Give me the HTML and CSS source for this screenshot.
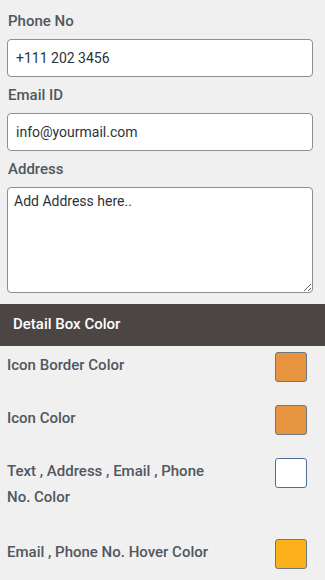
FILE: index.html
```html
<!DOCTYPE html>
<html lang="en">
  <head>
    <meta charset="UTF-8">
    <meta name="viewport" content="width=device-width, initial-scale=1.0">
    <title>Contact Details</title>
    <link rel="stylesheet" href="styles.css">
  </head>
  <body>
    <div class="fields">
      <label class="field-label" for="phone">Phone No</label>
      <input class="field-input" type="text" id="phone" value="+111 202 3456">
      <label class="field-label" for="email">Email ID</label>
      <input class="field-input" type="text" id="email" value="info@yourmail.com">
      <label class="field-label" for="address">Address</label>
      <textarea class="field-area" id="address">Add Address here..</textarea>
    </div>
    <div class="section-bar">Detail Box Color</div>
    <div class="options">
      <div class="opt-row">
        <span class="opt-label">Icon Border Color</span>
        <span class="swatch swatch-orange"></span>
      </div>
      <div class="opt-row">
        <span class="opt-label">Icon Color</span>
        <span class="swatch swatch-orange"></span>
      </div>
      <div class="opt-row tall">
        <span class="opt-label">Text , Address , Email , Phone No. Color</span>
        <span class="swatch swatch-white"></span>
      </div>
      <div class="opt-row">
        <span class="opt-label">Email , Phone No. Hover Color</span>
        <span class="swatch swatch-yellow"></span>
      </div>
    </div>
  </body>
</html>
```

FILE: styles.css
```css
body { margin: 0; background: #f0f0f0; font-family: Roboto, "Liberation Sans", sans-serif; color: #50575e; }
.fields { padding: 0 12px 0 7px; }
.field-label { display: block; font-size: 15px; line-height: 20px; font-weight: 500; margin: 8px 0 8px 1px; }
.field-label:first-child { margin-top: 11px; }
.field-input, .field-area { display: block; box-sizing: border-box; width: 100%; border: 1px solid #8c8f94; border-radius: 4px; background: #fff; font-family: Roboto, "Liberation Sans", sans-serif; font-size: 14px; color: #2c3338; padding: 0 8px; margin: 0; }
.field-input { height: 38px; }
.field-area { height: 106px; padding: 5px 6px; resize: vertical; }
.section-bar { margin-top: 11px; height: 42px; line-height: 40px; background: #4b4644; color: #fff; font-size: 15px; font-weight: 500; padding-left: 13px; }
.options { padding: 5px 18px 0 7px; }
.opt-row { display: flex; justify-content: space-between; align-items: flex-start; min-height: 53px; }
.opt-row.tall { min-height: 81px; }
.opt-label { width: 205px; padding-top: 1px; font-size: 15px; line-height: 26px; font-weight: 500; }
.swatch { box-sizing: border-box; width: 32px; height: 30px; margin-top: 1px; border: 1px solid #6c7781; border-radius: 3px; }
.swatch-orange { background: #e79441; }
.swatch-white { background: #fff; border-color: #4f6f8f; }
.swatch-yellow { background: #fcb11b; }
```
